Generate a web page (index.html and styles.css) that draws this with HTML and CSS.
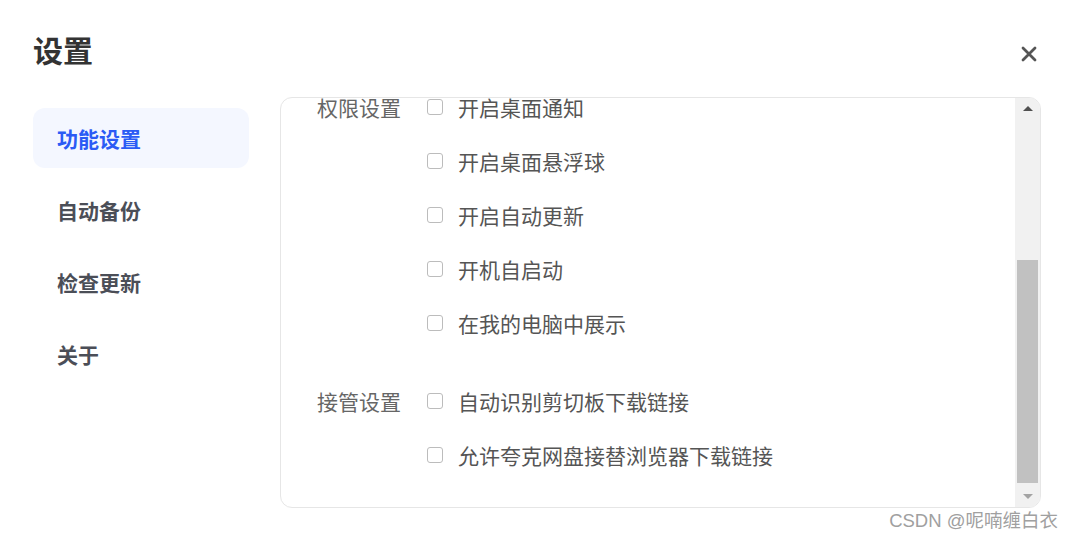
FILE: index.html
```html
<!DOCTYPE html>
<html lang="zh-CN">
<head>
    <meta charset="UTF-8" />
    <meta name="viewport" content="width=device-width, initial-scale=1" />
    <title>设置</title>
    <link rel="stylesheet" href="styles.css">
</head>
<body>

    <div class="dialog">
        <header class="dialog-head">
            <h1>设置</h1>
            <button class="close-btn" aria-label="关闭">
                <svg width="16" height="16" viewBox="0 0 16 16">
                    <path d="M2 2 L14 14 M14 2 L2 14" stroke="#555" stroke-width="2.8" stroke-linecap="round" fill="none" />
                </svg>
            </button>
        </header>

        <div class="dialog-body">
            <!-- Left side menu -->
            <nav class="side-menu">
                <div class="menu-item active">功能设置</div>
                <div class="menu-item">自动备份</div>
                <div class="menu-item">检查更新</div>
                <div class="menu-item">关于</div>
            </nav>

            <section class="panel">
                <div class="panel-content">
                    <div class="group">
                        <div class="group-label">权限设置</div>
                        <div class="options">
                            <label class="option"><span class="check"></span>开启桌面通知</label>
                            <label class="option"><span class="check"></span>开启桌面悬浮球</label>
                            <label class="option"><span class="check"></span>开启自动更新</label>
                            <label class="option"><span class="check"></span>开机自启动</label>
                            <label class="option"><span class="check"></span>在我的电脑中展示</label>
                        </div>
                    </div>

                    <div class="group">
                        <div class="group-label">接管设置</div>
                        <div class="options">
                            <label class="option"><span class="check"></span>自动识别剪切板下载链接</label>
                            <label class="option"><span class="check"></span>允许夸克网盘接替浏览器下载链接</label>
                        </div>
                    </div>
                </div>

                <!-- Scrollbar, scrolled to the bottom -->
                <div class="scrollbar">
                    <div class="sb-btn"><span class="arrow-up"></span></div>
                    <div class="sb-track"><div class="sb-thumb"></div></div>
                    <div class="sb-btn"><span class="arrow-down"></span></div>
                </div>
            </section>
        </div>

        <p class="watermark">CSDN @呢喃缠白衣</p>
    </div>

</body>
</html>
```

FILE: styles.css
```css
body {
    margin: 0;
    background: #fff;
    font-family: "Noto Sans CJK SC", "Microsoft YaHei", sans-serif;
    color: #333;
}

.dialog {
    width: 1074px;
    height: 538px;
    box-sizing: border-box;
    padding: 29px 33px 0 33px;
    overflow: hidden;
}

.dialog-head {
    display: flex;
    justify-content: space-between;
    align-items: flex-start;
    height: 40px;
}

    .dialog-head h1 {
        margin: 0;
        font-size: 30px;
        line-height: 40px;
        font-weight: bold;
        color: #333;
    }

.close-btn {
    margin: 17px 4px 0 0;
    padding: 0;
    border: none;
    background: none;
    width: 16px;
    height: 16px;
    cursor: pointer;
}

    .close-btn svg {
        display: block;
    }

.dialog-body {
    display: flex;
    gap: 31px;
    margin-top: 28px;
}

/* Side menu */
.side-menu {
    width: 216px;
    flex: none;
    display: flex;
    flex-direction: column;
    gap: 12px;
    margin-top: 11px;
}

.menu-item {
    height: 60px;
    line-height: 60px;
    padding-left: 24px;
    border-radius: 12px;
    font-size: 21px;
    font-weight: bold;
    color: #4b4e57;
}

    .menu-item.active {
        background: #f4f7ff;
        color: #2b5bf5;
    }

/* Right panel */
.panel {
    flex: 1;
    height: 409px;
    border: 1px solid #e6e6e6;
    border-radius: 12px;
    overflow: hidden;
    display: flex;
}

/* content is scrolled down a little */
.panel-content {
    flex: 1;
    padding: 0 0 0 36px;
    margin-top: -6px;
    display: flex;
    flex-direction: column;
    gap: 48px;
}

.group {
    display: flex;
}

.group-label {
    width: 110px;
    flex: none;
    height: 30px;
    display: flex;
    align-items: center;
    font-size: 21px;
    line-height: 20px;
    color: #666;
}

.options {
    display: flex;
    flex-direction: column;
    gap: 24px;
}

.option {
    display: flex;
    align-items: center;
    height: 30px;
    font-size: 21px;
    line-height: 20px;
    color: #555;
}

.check {
    width: 14px;
    height: 14px;
    border: 1px solid #bcbcbc;
    border-radius: 3px;
    margin-right: 15px;
    background: #fff;
}

/* Fake scrollbar */
.scrollbar {
    width: 25px;
    flex: none;
    display: flex;
    flex-direction: column;
    background: #f1f1f1;
}

.sb-btn {
    height: 24px;
    display: flex;
    align-items: center;
    justify-content: center;
}

.arrow-up {
    width: 0;
    height: 0;
    border-left: 5px solid transparent;
    border-right: 5px solid transparent;
    border-bottom: 5px solid #505050;
    margin-bottom: 3px;
}

.arrow-down {
    width: 0;
    height: 0;
    border-left: 5px solid transparent;
    border-right: 5px solid transparent;
    border-top: 5px solid #a3a3a3;
    margin-top: 3px;
}

.sb-track {
    flex: 1;
    display: flex;
    flex-direction: column;
    justify-content: flex-end;
}

.sb-thumb {
    height: 223px;
    margin: 0 2px;
    background: #c1c1c1;
}

.watermark {
    margin: 2px -17px 0 0;
    text-align: right;
    font-family: "Liberation Sans", "Noto Sans CJK SC", sans-serif;
    font-size: 18.5px;
    line-height: 22px;
    color: #a0a0a0;
}
```
